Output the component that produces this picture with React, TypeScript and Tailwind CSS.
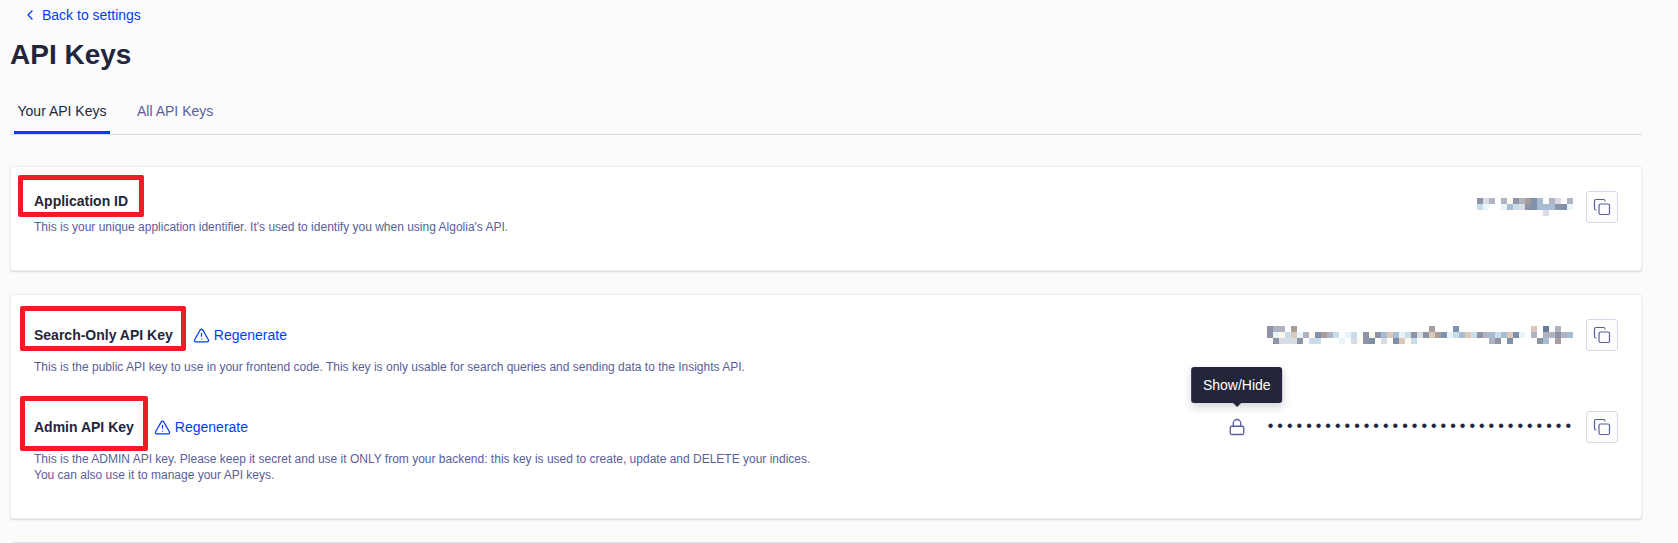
import { ChevronLeft, Copy, Lock, TriangleAlert } from "lucide-react";
import type { ReactNode } from "react";

const palette: Record<string, string> = {
  a: "#8f93a6",
  b: "#b0b4c2",
  c: "#d8dce4",
  d: "#c8dcea",
  e: "#e8f4fa",
  f: "#fff8ec",
  g: "#dcc8b8",
  h: "#7f90ac",
  i: "#a8bcd4",
  j: "#a89c9c",
  k: "#6a7a98",
};

// Blurred key values, one string per row of mosaic cells
const appIdCells = ["acb.bfabjhi.bc.b", "de..eidcahiiiahe", "...........c...."];
const searchKeyCells = [
  "abb.j......................j...h............g.k.b..",
  "aefdgebfhjbd.ed.afaigiedacagjhedigdabidighe.b.bbabi",
  ".accca.dd...e.cfah.c.hgfd............ba.h....ai.j..",
];

function Mosaic({ rows }: { rows: string[] }) {
  return (
    <svg width={rows[0].length * 6} height={rows.length * 6} className="block">
      {rows.map((row, y) =>
        row
          .split("")
          .map((cell, x) =>
            cell === "." ? null : (
              <rect key={`${x}-${y}`} x={x * 6} y={y * 6} width={6} height={6} fill={palette[cell]} />
            ),
          ),
      )}
    </svg>
  );
}

function CopyButton() {
  return (
    <button className="w-8 h-8 flex items-center justify-center bg-[#fdfdfe] border border-[#d6d6e7] rounded-[3px] text-[#5a5e9a]">
      <Copy size={18} strokeWidth={1.6} />
    </button>
  );
}

function Regenerate() {
  return (
    <a className="flex items-center gap-1 text-[14px] text-[#003dff]">
      <TriangleAlert size={17} strokeWidth={1.75} />
      Regenerate
    </a>
  );
}

// Red annotation drawn over the heading
function Marked({ children, box }: { children: ReactNode; box: string }) {
  return (
    <div className="relative">
      <h3 className="text-[14px] leading-5 font-bold text-[#23263b]">{children}</h3>
      <div className={`absolute border-[5px] border-[#ee1c25] rounded-[2px] ${box}`} />
    </div>
  );
}

function Description({ children }: { children: ReactNode }) {
  return <p className="mt-[14px] text-[12px] leading-4 text-[#5a5e9a]">{children}</p>;
}

export default function App() {
  return (
    <div
      className="h-[543px] overflow-hidden bg-[#fbfbfb] pl-[10px] pr-9"
      style={{ fontFamily: "'Liberation Sans', Arial, sans-serif" }}
    >
      <a className="flex items-center gap-1 pl-[12px] h-[30px] text-[14px] text-[#003dff]">
        <ChevronLeft size={16} strokeWidth={2} />
        Back to settings
      </a>
      <h1 className="mt-[5px] text-[28px] leading-10 font-bold text-[#23263b]">API Keys</h1>

      <div className="mt-5 flex gap-[27px] pl-1 border-b border-[#d6d6e7] h-10">
        <div className="w-[96px] h-[39px] border-b-[3px] border-[#003dff] pt-[6px] text-center text-[14px] leading-5 text-[#23263b]">
          Your API Keys
        </div>
        <div className="pt-[6px] text-[14px] leading-5 text-[#5a5e9a]">All API Keys</div>
      </div>

      <section className="mt-[31px] h-[105px] bg-white rounded-[3px] border border-[#eeeef3] shadow-[0_1px_2px_rgba(35,38,59,0.16)] px-[23px] pt-6">
        <div className="flex items-start justify-between">
          <div>
            <Marked box="-left-4 -top-4 w-[126px] h-[42px]">Application ID</Marked>
            <p className="mt-2 text-[12px] leading-4 text-[#5a5e9a]">
              This is your unique application identifier. It's used to identify you when using Algolia's API.
            </p>
          </div>
          <div className="flex items-center gap-[13px]">
            <Mosaic rows={appIdCells} />
            <CopyButton />
          </div>
        </div>
      </section>

      <section className="mt-[23px] h-[225px] bg-white rounded-[3px] border border-[#eeeef3] shadow-[0_1px_2px_rgba(35,38,59,0.16)] px-[23px] pt-6">
        <div className="flex items-start justify-between h-[92px]">
          <div>
            <div className="flex items-center gap-5 h-5 mt-[6px]">
              <Marked box="-left-[14px] -top-[19px] w-[166px] h-[45px]">Search-Only API Key</Marked>
              <Regenerate />
            </div>
            <Description>
              This is the public API key to use in your frontend code. This key is only usable for search queries and sending data to the Insights API.
            </Description>
          </div>
          <div className="flex items-center gap-[13px]">
            <Mosaic rows={searchKeyCells} />
            <CopyButton />
          </div>
        </div>

        <div className="flex items-start justify-between">
          <div>
            <div className="flex items-center gap-5 h-5 mt-[6px]">
              <Marked box="-left-[14px] -top-[21px] w-[128px] h-[55px]">Admin API Key</Marked>
              <Regenerate />
            </div>
            <Description>
              This is the ADMIN API key. Please keep it secret and use it ONLY from your backend: this key is used to create, update and DELETE your indices.
              <br />
              You can also use it to manage your API keys.
            </Description>
          </div>
          <div className="flex items-center gap-[13px]">
            <div className="relative mr-[7px] text-[#5a5e9a]">
              <Lock size={18} strokeWidth={1.75} />
              <div className="absolute -top-[51px] left-1/2 -translate-x-1/2 px-3 h-9 flex items-center bg-[#23263b] rounded-[3px] text-[14px] text-white whitespace-nowrap shadow-[0_4px_8px_rgba(35,38,59,0.2)]">
                Show/Hide
                <div className="absolute left-1/2 -bottom-1 -translate-x-1/2 w-0 h-0 border-x-4 border-x-transparent border-t-4 border-t-[#23263b]" />
              </div>
            </div>
            <span className="text-[16px] text-[#23263b]" style={{ fontFamily: "'Liberation Mono', monospace" }}>
              ••••••••••••••••••••••••••••••••
            </span>
            <CopyButton />
          </div>
        </div>
      </section>

      <section className="mt-[23px] h-20 bg-white rounded-[3px] border border-[#e4e4ec]" />
    </div>
  );
}
